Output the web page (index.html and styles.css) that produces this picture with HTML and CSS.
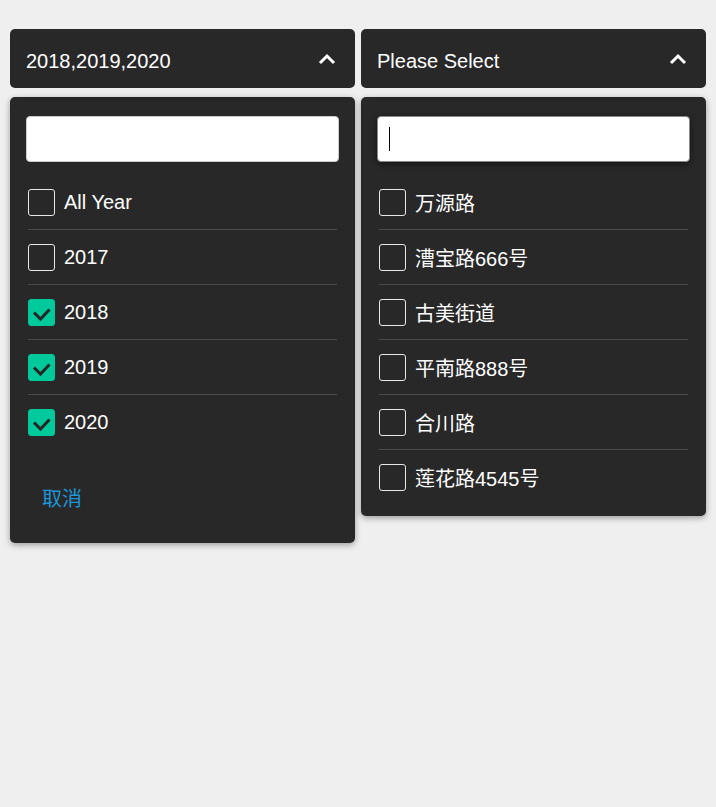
FILE: index.html
```html
<!DOCTYPE html>
<html lang="zh">
<head>
    <meta charset="UTF-8">
    <title>Multi Select</title>
    <link rel="stylesheet" href="styles.css">
</head>
<body>
    <div class="selects">
        <div class="select">
            <div class="select-head">
                <span class="value">2018,2019,2020</span>
                <svg class="chevron" width="18" height="12" viewBox="0 0 18 12"><path d="M2 10 L9 3 L16 10" fill="none" stroke="#fff" stroke-width="3"/></svg>
            </div>
            <div class="dropdown">
                <div class="search-wrap">
                    <input type="text" class="search">
                </div>
                <ul class="options">
                    <li><span class="box"></span>All Year</li>
                    <li><span class="box"></span>2017</li>
                    <li><span class="box checked"><svg width="27" height="27" viewBox="0 0 27 27"><path d="M6 13.5 L12.5 20 L21.5 10.5" fill="none" stroke="#262626" stroke-width="3"/></svg></span>2018</li>
                    <li><span class="box checked"><svg width="27" height="27" viewBox="0 0 27 27"><path d="M6 13.5 L12.5 20 L21.5 10.5" fill="none" stroke="#262626" stroke-width="3"/></svg></span>2019</li>
                    <li><span class="box checked"><svg width="27" height="27" viewBox="0 0 27 27"><path d="M6 13.5 L12.5 20 L21.5 10.5" fill="none" stroke="#262626" stroke-width="3"/></svg></span>2020</li>
                </ul>
                <button class="cancel">取消</button>
            </div>
        </div>

        <div class="select">
            <div class="select-head">
                <span class="value">Please Select</span>
                <svg class="chevron" width="18" height="12" viewBox="0 0 18 12"><path d="M2 10 L9 3 L16 10" fill="none" stroke="#fff" stroke-width="3"/></svg>
            </div>
            <div class="dropdown">
                <div class="search-wrap">
                    <input type="text" class="search focused">
                    <span class="caret"></span>
                </div>
                <ul class="options">
                    <li><span class="box"></span>万源路</li>
                    <li><span class="box"></span>漕宝路666号</li>
                    <li><span class="box"></span>古美街道</li>
                    <li><span class="box"></span>平南路888号</li>
                    <li><span class="box"></span>合川路</li>
                    <li><span class="box"></span>莲花路4545号</li>
                </ul>
            </div>
        </div>
    </div>
</body>
</html>
```

FILE: styles.css
```css
body {
    margin: 0;
    padding: 29px 10px;
    background: #efefef;
    font-family: "Liberation Sans", "Noto Sans CJK SC", sans-serif;
    color: #fff;
}
.selects {
    display: flex;
    gap: 6px;
    align-items: flex-start;
}
.select {
    width: 345px;
}
.select-head {
    height: 59px;
    background: #282828;
    border-radius: 5px;
    display: flex;
    align-items: center;
    justify-content: space-between;
    padding: 0 19px 0 16px;
    font-size: 20px;
    box-sizing: border-box;
}
.value {
    padding-top: 5px;
}
.chevron {
    display: block;
}
.dropdown {
    margin-top: 9px;
    background: #282828;
    border-radius: 5px;
    padding: 19px 16px 12px;
    box-shadow: 0 2px 6px rgba(0,0,0,0.35);
}
.search-wrap {
    position: relative;
}
.search {
    display: block;
    width: 100%;
    height: 46px;
    border: 1px solid #ccc;
    border-radius: 4px;
    box-sizing: border-box;
    background: #fff;
    font-size: 20px;
    padding: 0 12px;
    outline: none;
}
.search.focused {
    border-color: #888;
    box-shadow: 0 2px 6px rgba(0,0,0,0.5);
}
.caret {
    position: absolute;
    left: 12px;
    top: 11px;
    width: 1px;
    height: 24px;
    background: #000;
}
.options {
    list-style: none;
    margin: 12px 2px 0;
    padding: 0;
}
.options li {
    height: 55px;
    display: flex;
    align-items: center;
    gap: 9px;
    font-size: 20px;
    padding-top: 1px;
    border-top: 1px solid #4a4a4a;
    box-sizing: border-box;
}
.options li:first-child {
    border-top: none;
}
.box {
    width: 27px;
    height: 27px;
    border: 1px solid #e8e8e8;
    border-radius: 3px;
    box-sizing: border-box;
    flex-shrink: 0;
}
.box.checked {
    background: #00c99b;
    border-color: #00c99b;
}
.box svg {
    display: block;
    margin: -1px;
}
.cancel {
    background: none;
    border: none;
    color: #1d96d8;
    font-family: "Liberation Sans", "Noto Sans CJK SC", sans-serif;
    font-size: 20px;
    padding: 0 16px;
    margin: 38px 0 20px;
    line-height: 24px;
    cursor: pointer;
}
```
